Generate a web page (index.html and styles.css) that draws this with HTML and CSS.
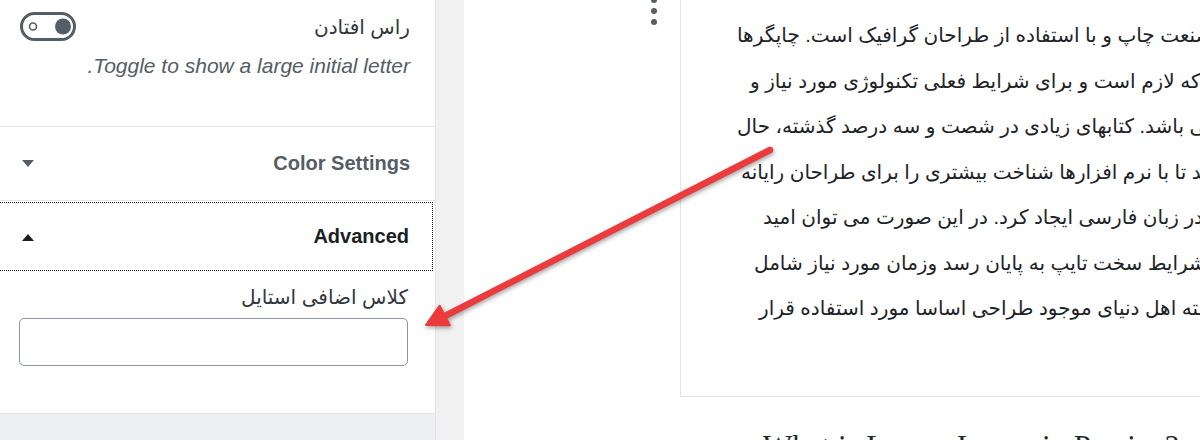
FILE: index.html
```
<!DOCTYPE html>
<html lang="fa">
<head>
  <meta charset="UTF-8" />
  <title>ویرایشگر - تنظیمات بلوک</title>
  <link rel="stylesheet" href="styles.css">
</head>
<body>

<!-- تنظیمات بلوک -->
<aside class="sidebar">
  <div class="panel-toggle">
    <div class="toggle-row">
      <span class="toggle-label">راس افتادن</span>
      <svg class="toggle" width="57" height="30" viewBox="0 0 57 30">
        <rect x="1.5" y="1.5" width="53" height="26" rx="13" fill="none" stroke="#555d66" stroke-width="3"/>
        <circle cx="13" cy="14.5" r="3.5" fill="none" stroke="#555d66" stroke-width="1.6"/>
        <circle cx="43" cy="14.5" r="8" fill="#555d66"/>
      </svg>
    </div>
    <p class="help">Toggle to show a large initial letter.</p>
  </div>

  <div class="panel-head">
    <span>Color Settings</span>
    <svg width="12" height="8" viewBox="0 0 12 8"><polygon points="0,0 12,0 6,7" fill="#555d66"/></svg>
  </div>

  <div class="panel-head is-open">
    <span>Advanced</span>
    <svg width="12" height="8" viewBox="0 0 12 8"><polygon points="0,8 12,8 6,1" fill="#191e23"/></svg>
  </div>

  <div class="panel-body">
    <label for="extra-class">کلاس اضافی استایل</label>
    <input type="text" id="extra-class" />
  </div>

  <div class="sidebar-foot"></div>
</aside>

<div class="gutter"></div>

<!-- محتوای نوشته -->
<main class="editor">
  <div class="block">
    <div class="block-tools">
      <svg width="20" height="60" viewBox="0 0 20 60">
        <circle cx="10" cy="30" r="3" fill="#555d66"/>
        <circle cx="10" cy="41" r="3" fill="#555d66"/>
        <circle cx="10" cy="52" r="3" fill="#555d66"/>
      </svg>
    </div>
    <div class="block-box">
      <div class="line">لورم ایپسوم متن ساختگی با تولید سادگی نامفهوم از صنعت چاپ و با استفاده از طراحان گرافیک است. چاپگرها</div>
      <div class="line">و متون بلکه روزنامه و مجله در ستون و سطرآنچنان که لازم است و برای شرایط فعلی تکنولوژی مورد نیاز و</div>
      <div class="line">کاربردهای متنوع با هدف بهبود ابزارهای کاربردی می باشد. کتابهای زیادی در شصت و سه درصد گذشته، حال</div>
      <div class="line">و آینده شناخت فراوان جامعه و متخصصان را می طلبد تا با نرم افزارها شناخت بیشتری را برای طراحان رایانه</div>
      <div class="line">ای علی الخصوص طراحان خلاقی و فرهنگ پیشرو در زبان فارسی ایجاد کرد. در این صورت می توان امید</div>
      <div class="line">داشت که تمام و دشواری موجود در ارائه راهکارها و شرایط سخت تایپ به پایان رسد وزمان مورد نیاز شامل</div>
      <div class="line">حروفچینی دستاوردهای اصلی و جوابگوی سوالات پیوسته اهل دنیای موجود طراحی اساسا مورد استفاده قرار</div>
    </div>
  </div>
  <h2 class="next-heading">What is Lorem Ipsum in Persian?</h2>
</main>

<!-- فلش راهنما روی تصویر -->
<svg class="arrow" width="1200" height="440" viewBox="0 0 1200 440">
  <line x1="770" y1="150" x2="443" y2="317" stroke="#eb3b3c" stroke-width="6.5" stroke-linecap="round"/>
  <polygon points="426,325 439.7,305.7 449.7,325.3" fill="#eb3b3c" stroke="#eb3b3c" stroke-width="2" stroke-linejoin="round"/>
</svg>

</body>
</html>
```

FILE: styles.css
```
* {
  box-sizing: border-box;
}
body {
  margin: 0;
  height: 440px;
  overflow: hidden;
  display: flex;
  position: relative;
  font-family: "Liberation Sans", "DejaVu Sans", sans-serif;
  background: #fff;
  color: #32373c;
}
.sidebar {
  width: 436px;
  flex: none;
  border-right: 1px solid #e2e4e7;
  display: flex;
  flex-direction: column;
  direction: rtl;
}
.panel-toggle {
  height: 127px;
  border-bottom: 1px solid #e2e4e7;
  padding: 12px 25px 0 20px;
}
.toggle-row {
  display: flex;
  justify-content: space-between;
  align-items: center;
}
.toggle-label {
  font-size: 20px;
  color: #32373c;
}
.toggle {
  display: block;
}
.help {
  margin: 12px 0 0;
  font-size: 21px;
  line-height: 24px;
  font-style: italic;
  color: #555d66;
}
.panel-head {
  height: 74px;
  border-bottom: 1px solid #e2e4e7;
  padding: 0 25px 0 22px;
  display: flex;
  justify-content: space-between;
  align-items: center;
  font-size: 20px;
  font-weight: bold;
  color: #555d66;
}
.panel-head.is-open {
  height: 69px;
  margin: 1px 2px 0 0;
  border: 1px dotted #191e23;
  border-left: 0;
  color: #191e23;
  padding-right: 23px;
}
.panel-body {
  padding: 14px 27px 47px 19px;
  display: flex;
  flex-direction: column;
}
.panel-body label {
  font-size: 20px;
  line-height: 24px;
  color: #32373c;
  margin-bottom: 9px;
}
.panel-body input {
  height: 48px;
  border: 1px solid #8d96a0;
  border-radius: 5px;
  background: #fff;
}
.sidebar-foot {
  flex: 1;
  background: #edeff0;
  border-top: 1px solid #e2e4e7;
}
.gutter {
  width: 28px;
  flex: none;
  background: #f1f1f1;
}
.editor {
  flex: 1;
  min-width: 0;
  overflow: hidden;
  display: flex;
  flex-direction: column;
}
.block {
  display: flex;
  margin-top: -30px;
  padding-left: 180px;
}
.block-tools {
  width: 20px;
  flex: none;
  margin-right: 16px;
}
.block-tools svg {
  display: block;
}
.block-box {
  flex: none;
  width: 1400px;
  border: 1px solid #e2e4e7;
  padding: 42px 0 64px 56px;
  direction: rtl;
  color: #1e2327;
  font-size: 20px;
  line-height: 45.5px;
}
.line {
  white-space: nowrap;
  text-align: left;
}
/* پایان سطرها در تصویر اصلی هم‌تراز نیستند */
.line:nth-child(2) { padding-left: 13px; }
.line:nth-child(4) { padding-left: 4px; }
.line:nth-child(5) { padding-left: 26px; }
.line:nth-child(6) { padding-left: 17px; }
.line:nth-child(7) { padding-left: 22px; }
.next-heading {
  margin: 32px 0 0 299px;
  font-family: "Liberation Serif", serif;
  font-size: 31px;
  font-weight: normal;
  color: #23282d;
  white-space: nowrap;
}
.arrow {
  position: absolute;
  top: 0;
  left: 0;
  pointer-events: none;
  filter: drop-shadow(1px 2px 2px rgba(0, 0, 0, 0.35));
}
```
